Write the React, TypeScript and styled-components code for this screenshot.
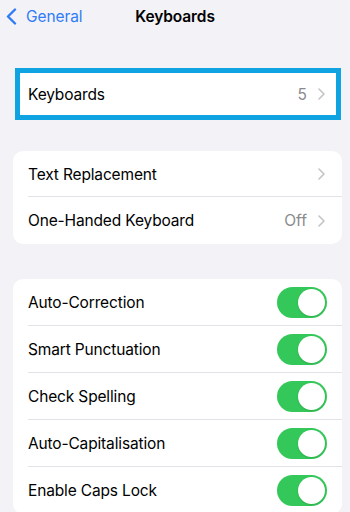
import React from "react";
import styled, { createGlobalStyle } from "styled-components";

const GlobalStyle = createGlobalStyle`
  html, body { margin: 0; padding: 0; background: #f2f2f7; }
  body { font-family: Inter, "Noto Sans", "Liberation Sans", sans-serif; -webkit-font-smoothing: antialiased; }
  * { box-sizing: border-box; }
`;

const Page = styled.div`
  width: 350px;
  min-height: 512px;
  background: #f2f2f7;
  overflow: hidden;
`;

const NavBar = styled.div`
  display: grid;
  grid-template-columns: 1fr auto 1fr;
  align-items: center;
  height: 32px;
`;

const BackButton = styled.div`
  display: flex;
  align-items: center;
  gap: 9px;
  padding-left: 6px;
  color: #2f7cf6;
  font-size: 15.5px;
  letter-spacing: -0.1px;
`;

const Title = styled.div`
  font-size: 15.5px;
  font-weight: 600;
  color: #000;
  letter-spacing: -0.1px;
`;

const HighlightGroup = styled.div`
  margin: 36px 9px 0 15px;
  border: 5px solid #0fa3e2;
  background: #fff;
  height: 52px;
  display: flex;
  flex-direction: column;
  justify-content: center;
`;

const Group = styled.div<{ $top: number }>`
  margin: ${(p) => p.$top}px 8px 0 13px;
  background: #fff;
  border-radius: 10px;
  overflow: hidden;
`;

const Row = styled.div<{ $h: number; $inset: number; $divider?: boolean }>`
  height: ${(p) => p.$h}px;
  display: flex;
  align-items: center;
  padding: 0 ${(p) => p.$inset}px 0 ${(p) => p.$inset === 11 ? 8 : 15}px;
  margin-left: 0;
  position: relative;
  &::after {
    content: "";
    display: ${(p) => (p.$divider ? "block" : "none")};
    position: absolute;
    left: 15px;
    right: 0;
    bottom: 0;
    height: 1px;
    background: #e3e3e7;
  }
`;

const Label = styled.div`
  flex: 1;
  font-size: 15.5px;
  color: #000;
  letter-spacing: -0.15px;
`;

const Value = styled.div`
  font-size: 15.5px;
  color: #8a8a8e;
  margin-right: 11px;
`;

const Toggle = styled.div<{ $on: boolean }>`
  width: 50px;
  height: 31px;
  border-radius: 16px;
  background: ${(p) => (p.$on ? "#34c759" : "#e9e9eb")};
  position: relative;
  flex-shrink: 0;
`;

const Knob = styled.div`
  position: absolute;
  top: 2px;
  right: 2px;
  width: 27px;
  height: 27px;
  border-radius: 50%;
  background: #fff;
  box-shadow: 0 1px 2px rgba(0, 0, 0, 0.12);
`;

const Chevron = () => (
  <svg width="7" height="12" viewBox="0 0 7 12" style={{ flexShrink: 0 }}>
    <path d="M1 1l5 5-5 5" fill="none" stroke="#c4c4c7" strokeWidth="1.6" strokeLinecap="round" strokeLinejoin="round" />
  </svg>
);

const BackChevron = () => (
  <svg width="11" height="17" viewBox="0 0 11 17">
    <path d="M9 1.5L2 8.5l7 7" fill="none" stroke="#2f7cf6" strokeWidth="2.4" strokeLinecap="round" strokeLinejoin="round" />
  </svg>
);

const toggles = [
  "Auto-Correction",
  "Smart Punctuation",
  "Check Spelling",
  "Auto-Capitalisation",
  "Enable Caps Lock",
];

export default function App() {
  return (
    <>
      <GlobalStyle />
      <Page>
        <NavBar>
          <BackButton>
            <BackChevron />
            General
          </BackButton>
          <Title>Keyboards</Title>
          <div />
        </NavBar>

        <HighlightGroup>
          <Row $h={42} $inset={11}>
            <Label>Keyboards</Label>
            <Value>5</Value>
            <Chevron />
          </Row>
        </HighlightGroup>

        <Group $top={31}>
          <Row $h={46} $inset={17} $divider>
            <Label>Text Replacement</Label>
            <Chevron />
          </Row>
          <Row $h={47} $inset={17}>
            <Label>One-Handed Keyboard</Label>
            <Value>Off</Value>
            <Chevron />
          </Row>
        </Group>

        <Group $top={35}>
          {toggles.map((t, i) => (
            <Row key={t} $h={47} $inset={15} $divider={i < toggles.length - 1}>
              <Label>{t}</Label>
              <Toggle $on>
                <Knob />
              </Toggle>
            </Row>
          ))}
        </Group>
      </Page>
    </>
  );
}
